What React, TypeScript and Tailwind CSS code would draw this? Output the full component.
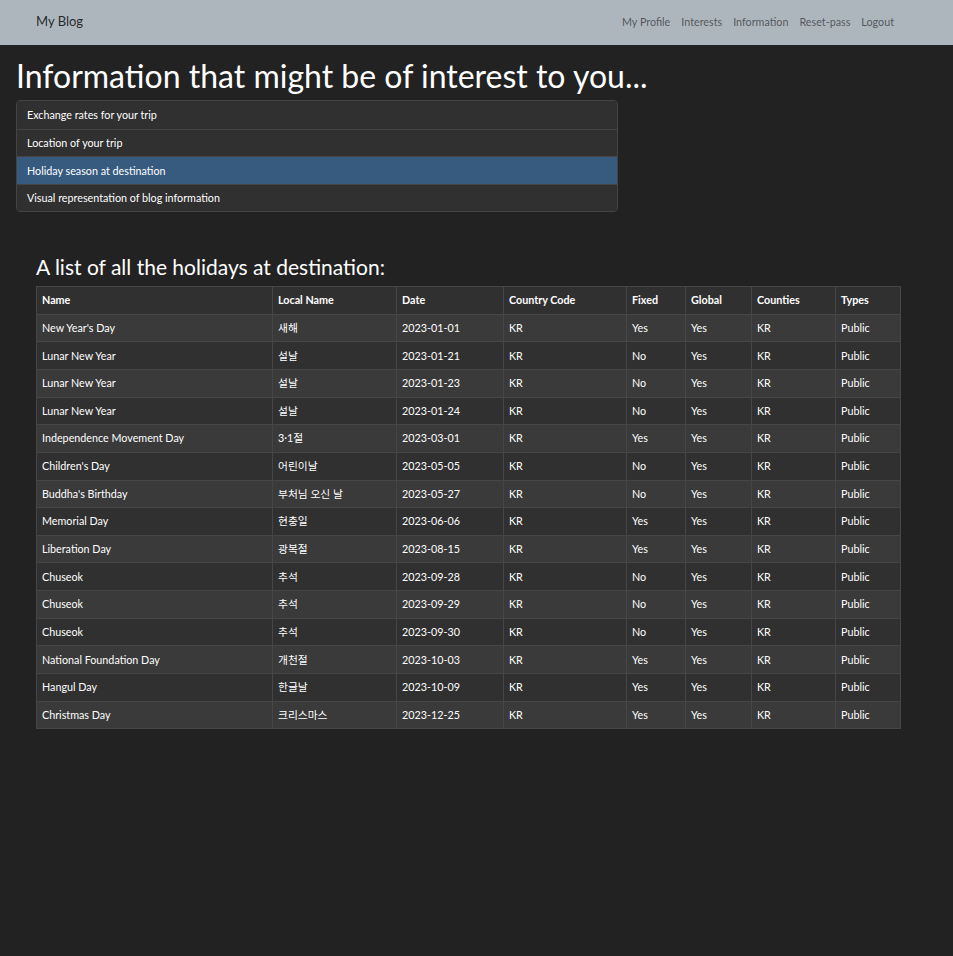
import { useEffect } from 'react';

interface Holiday {
  name: string;
  localName: string;
  date: string;
  fixed: boolean;
}

const holidays: Holiday[] = [
  { name: "New Year's Day", localName: '새해', date: '2023-01-01', fixed: true },
  { name: 'Lunar New Year', localName: '설날', date: '2023-01-21', fixed: false },
  { name: 'Lunar New Year', localName: '설날', date: '2023-01-23', fixed: false },
  { name: 'Lunar New Year', localName: '설날', date: '2023-01-24', fixed: false },
  { name: 'Independence Movement Day', localName: '3·1절', date: '2023-03-01', fixed: true },
  { name: "Children's Day", localName: '어린이날', date: '2023-05-05', fixed: false },
  { name: "Buddha's Birthday", localName: '부처님 오신 날', date: '2023-05-27', fixed: false },
  { name: 'Memorial Day', localName: '현충일', date: '2023-06-06', fixed: true },
  { name: 'Liberation Day', localName: '광복절', date: '2023-08-15', fixed: true },
  { name: 'Chuseok', localName: '추석', date: '2023-09-28', fixed: false },
  { name: 'Chuseok', localName: '추석', date: '2023-09-29', fixed: false },
  { name: 'Chuseok', localName: '추석', date: '2023-09-30', fixed: false },
  { name: 'National Foundation Day', localName: '개천절', date: '2023-10-03', fixed: true },
  { name: 'Hangul Day', localName: '한글날', date: '2023-10-09', fixed: true },
  { name: 'Christmas Day', localName: '크리스마스', date: '2023-12-25', fixed: true },
];

const navLinks = ['My Profile', 'Interests', 'Information', 'Reset-pass', 'Logout'];

const infoItems = [
  'Exchange rates for your trip',
  'Location of your trip',
  'Holiday season at destination',
  'Visual representation of blog information',
];

const columns = [
  { label: 'Name', width: 'w-[236px]' },
  { label: 'Local Name', width: 'w-[124px]' },
  { label: 'Date', width: 'w-[107px]' },
  { label: 'Country Code', width: 'w-[123px]' },
  { label: 'Fixed', width: 'w-[59px]' },
  { label: 'Global', width: 'w-[66px]' },
  { label: 'Counties', width: 'w-[84px]' },
  { label: 'Types', width: 'w-[65px]' },
];

export default function App() {
  useEffect(() => {
    // dark page scrollbars, like the themed original
    document.documentElement.classList.add('[color-scheme:dark]', 'bg-[#222222]');
  }, []);

  return (
    <div className="min-w-[948px] min-h-[1310px] bg-[#222222] text-white font-['Lato','Noto_Sans_CJK_KR',sans-serif]">
      {/* Navbar */}
      <nav className="h-[45px] bg-[#adb5bd] flex items-center">
        <div className="w-[864px] ml-[36px] flex items-center justify-between">
          <a href="#" className="text-[13px] text-[rgba(0,0,0,0.8)] leading-none -mt-[3px]">
            My Blog
          </a>
          <ul className="flex items-center gap-[11px] pr-[6px] text-[10.75px] text-[rgba(0,0,0,0.55)]">
            {navLinks.map((link) => (
              <li key={link}>
                <a href="#">{link}</a>
              </li>
            ))}
          </ul>
        </div>
      </nav>

      {/* Info links */}
      <div className="pl-[16px]">
        <h1 className="mt-[12px] mb-[5px] text-[32px] leading-[1.2] font-normal">
          Information that might be of interest to you...
        </h1>
        <div className="w-[602px] rounded-[4px] border border-[#444444] overflow-hidden">
          {infoItems.map((item, i) => (
            <a
              key={item}
              href="#"
              className={`flex items-center h-[27.5px] pl-[10px] text-[10.75px] ${
                i > 0 ? 'border-t border-[#444444]' : ''
              } ${i === 2 ? 'bg-[#375a7f]' : 'bg-[#303030]'}`}
            >
              {item}
            </a>
          ))}
        </div>
      </div>

      {/* Holidays */}
      <div className="w-[864px] ml-[36px] mt-[42px]">
        <h3 className="text-[21px] leading-[1.2] font-normal mb-[6px]">
          A list of all the holidays at destination:
        </h3>
        <table className="w-[864px] table-fixed border-collapse text-[10.75px]">
          <thead>
            <tr className="bg-[#303030] h-[28px]">
              {columns.map((col) => (
                <th
                  key={col.label}
                  className={`${col.width} border border-[#464646] px-[5px] text-left font-bold`}
                >
                  {col.label}
                </th>
              ))}
            </tr>
          </thead>
          <tbody>
            {holidays.map((h, i) => (
              <tr
                key={h.date}
                className={`h-[27.67px] ${i % 2 === 0 ? 'bg-[#3a3a3a]' : 'bg-[#303030]'}`}
              >
                <td className="border border-[#464646] px-[5px]">{h.name}</td>
                <td className="border border-[#464646] px-[5px]">{h.localName}</td>
                <td className="border border-[#464646] px-[5px]">{h.date}</td>
                <td className="border border-[#464646] px-[5px]">KR</td>
                <td className="border border-[#464646] px-[5px]">{h.fixed ? 'Yes' : 'No'}</td>
                <td className="border border-[#464646] px-[5px]">Yes</td>
                <td className="border border-[#464646] px-[5px]">KR</td>
                <td className="border border-[#464646] px-[5px]">Public</td>
              </tr>
            ))}
          </tbody>
        </table>
      </div>
    </div>
  );
}
